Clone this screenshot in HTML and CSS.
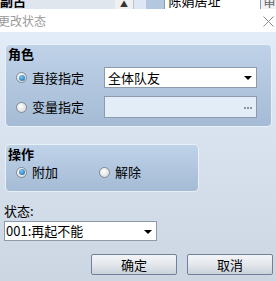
FILE: index.html
```html
<!DOCTYPE html>
<html lang="zh">
<head>
<meta charset="utf-8">
<title>更改状态</title>
<link rel="stylesheet" href="styles.css">
</head>
<body>
<div class="strip">
  <div class="s-left"><span class="s-txt">副占</span></div>
  <div class="s-scroll"><span class="s-arrow">▲</span></div>
  <div class="s-a"></div>
  <div class="s-b"></div>
  <div class="s-box"><span class="s-txt s-thin">陈娟居址</span></div>
  <div class="s-right"><span class="s-txt s-thin">审</span></div>
</div>
<div class="titlebar">
  <span class="title">更改状态</span>
  <svg class="close" width="11" height="11" viewBox="0 0 11 11"><path d="M0.5 0.5 L10.5 10.5 M10.5 0.5 L0.5 10.5" stroke="#8a8a8a" stroke-width="1" fill="none"/></svg>
</div>
<div class="dialog">
  <div class="group g1">
    <div class="gtitle">角色</div>
    <div class="row r1">
      <div class="opt"><span class="radio on"></span><span>直接指定</span></div>
      <div class="combo"><span>全体队友</span><span class="arrow"></span></div>
    </div>
    <div class="row r2">
      <div class="opt"><span class="radio"></span><span>变量指定</span></div>
      <div class="field"><span class="dots"><i></i><i></i><i></i></span></div>
    </div>
  </div>
  <div class="group g2">
    <div class="gtitle">操作</div>
    <div class="row r3">
      <div class="opt o1"><span class="radio on"></span><span>附加</span></div>
      <div class="opt"><span class="radio"></span><span>解除</span></div>
    </div>
  </div>
  <div class="label">状态:</div>
  <div class="combo c2"><span>001:再起不能</span><span class="arrow"></span></div>
  <div class="buttons">
    <div class="btn">确定</div>
    <div class="btn">取消</div>
  </div>
</div>
</body>
</html>
```
FILE: styles.css
```css
html, body {
  margin: 0;
  padding: 0;
  width: 276px;
  height: 281px;
  overflow: hidden;
  font-family: "Noto Sans CJK SC", "Microsoft YaHei", sans-serif;
  font-size: 13px;
  color: #000;
}
.strip {
  display: flex;
  height: 9px;
  overflow: hidden;
  background: #dfe6ee;
}
.s-txt {
  display: block;
  font-weight: bold;
  line-height: 16px;
  margin-top: -7px;
  padding-left: 0;
}
.s-thin { font-weight: normal; }
.s-left { width: 117px; }
.s-scroll {
  width: 18px;
  background: #f0f0f0;
  text-align: center;
  font-size: 8px;
  line-height: 9px;
  color: #333;
}
.s-arrow { display: block; margin-top: -1px; }
.s-a { width: 12px; background: #dde8f4; border-left: 1px solid #b9c6d4; }
.s-b { width: 19px; background: #b3c7de; }
.s-box {
  width: 93px;
  background: #fff;
  border-left: 1px solid #8d9aab;
  border-right: 1px solid #8d9aab;
  padding-left: 3px;
}
.s-right { flex: 1; background: #eef2f6; padding-left: 2px; color: #666; }
.titlebar {
  height: 23px;
  background: #fff;
  display: flex;
  align-items: center;
  justify-content: space-between;
}
.title {
  color: #9a9a9a;
  font-size: 12px;
  margin-left: -2px;
  line-height: 16px;
}
.close { margin-right: 2px; margin-top: 1px; }
.dialog {
  height: 249px;
  background: linear-gradient(#e2ecf8, #cbd6e2);
  padding-left: 4px;
  box-sizing: border-box;
  overflow: hidden;
  padding-top: 12px;
}
.group {
  box-sizing: border-box;
  margin-left: 1px;
  border: 1px solid #e8f0f8;
  border-radius: 5px;
  background: linear-gradient(#bfd2e8, #a5bbd5);
  padding-top: 1px;
}
.g1 { width: 267px; height: 83px; }
.g2 { width: 194px; height: 48px; margin-top: 17px; padding-top: 1px; }
.gtitle {
  font-weight: bold;
  line-height: 16px;
  padding-left: 2px;
}
.row { display: flex; align-items: center; }
.r1 { margin-top: 5px; height: 21px; }
.r2 { margin-top: 8px; height: 22px; }
.r3 { margin-top: 2px; height: 16px; }
.opt {
  display: flex;
  align-items: center;
  width: 98px;
  padding-left: 10px;
  box-sizing: border-box;
  line-height: 16px;
}
.g2 .opt { width: auto; }
.g2 .o1 { width: 93px; padding-left: 10px; }
.g2 .opt + .opt { padding-left: 0; }
.radio {
  width: 11px;
  height: 11px;
  box-sizing: border-box;
  border-radius: 50%;
  border: 1px solid #85898f;
  background: radial-gradient(circle at 40% 35%, #ffffff, #cfd2d6);
  margin-right: 5px;
  position: relative;
}
.radio.on::after {
  content: "";
  position: absolute;
  left: 1.5px;
  top: 1.5px;
  width: 6px;
  height: 6px;
  border-radius: 50%;
  background: radial-gradient(circle at 40% 35%, #79c8f2, #0f5fa8);
}
.combo {
  box-sizing: border-box;
  width: 153px;
  height: 21px;
  background: #fff;
  border: 1px solid #8d9aab;
  display: flex;
  align-items: center;
  justify-content: space-between;
  padding: 0 4px 0 3px;
  line-height: 16px;
}
.arrow {
  width: 0;
  height: 0;
  border-left: 4px solid transparent;
  border-right: 4px solid transparent;
  border-top: 4px solid #000;
  margin-top: 1px;
}
.field {
  box-sizing: border-box;
  width: 153px;
  height: 22px;
  background: #e3edf8;
  border: 1px solid #8d9aab;
  display: flex;
  align-items: center;
  justify-content: flex-end;
  padding-right: 4px;
}
.dots {
  display: flex;
  gap: 1px;
  margin-top: 1px;
}
.dots i {
  display: block;
  width: 2px;
  height: 2px;
  background: #8a94a6;
}
.label {
  margin-top: 11px;
  line-height: 16px;
}
.c2 {
  margin-top: 2px;
  height: 20px;
  padding-left: 1px;
}
.buttons {
  display: flex;
  justify-content: flex-end;
  gap: 10px;
  margin-top: 13px;
  padding-right: 3px;
}
.btn {
  box-sizing: border-box;
  width: 86px;
  height: 21px;
  border: 1px solid #70819a;
  border-radius: 2px;
  background: linear-gradient(#f3f5f8, #e3e7ec 50%, #c9d1db);
  text-align: center;
  line-height: 19px;
}
```
